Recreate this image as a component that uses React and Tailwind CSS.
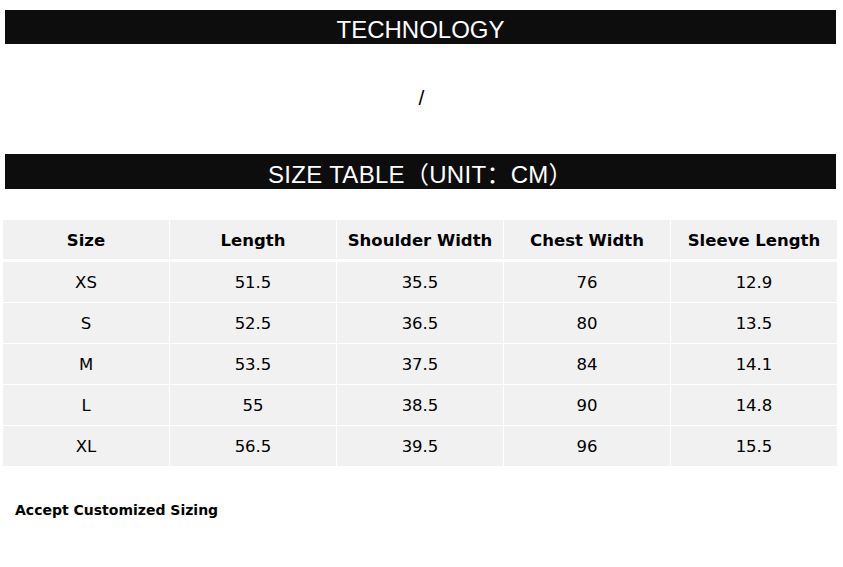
import React from "react";

const headers = ["Size", "Length", "Shoulder Width", "Chest Width", "Sleeve Length"];

const rows = [
  ["XS", "51.5", "35.5", "76", "12.9"],
  ["S", "52.5", "36.5", "80", "13.5"],
  ["M", "53.5", "37.5", "84", "14.1"],
  ["L", "55", "38.5", "90", "14.8"],
  ["XL", "56.5", "39.5", "96", "15.5"],
];

const titleFont = { fontFamily: '"Liberation Sans", "Noto Sans CJK SC", sans-serif' };

const TitleBar = ({ children, className = "" }) => (
  <div
    className={`ml-[5px] mr-[7px] bg-[#0d0d0d] text-white text-[24px] leading-none flex items-center justify-center ${className}`}
    style={titleFont}
  >
    <span className="pt-[6px]">{children}</span>
  </div>
);

export default function App() {
  return (
    <div className="w-[843px] h-[567px] bg-white overflow-hidden pt-[10px] font-['DejaVu_Sans',sans-serif] text-black">
      <TitleBar className="h-[34px]">TECHNOLOGY</TitleBar>

      {/* description placeholder */}
      <div
        className="h-[110px] flex items-center justify-center text-[21px] pb-[2px]"
        style={titleFont}
      >
        /
      </div>

      <TitleBar className="h-[35px]">
        <span className="tracking-[0.3px]">SIZE TABLE（UNIT：CM）</span>
      </TitleBar>

      <div className="mt-[31px] ml-[3px] w-[834px]">
        <div className="grid grid-cols-5 gap-px mb-[3px]">
          {headers.map((h) => (
            <div key={h} className="h-[39px] bg-[#f1f1f1] flex items-center justify-center text-[16.5px] font-bold pt-[3px]">
              {h}
            </div>
          ))}
        </div>
        <div className="flex flex-col gap-px">
          {rows.map((r) => (
            <div key={r[0]} className="grid grid-cols-5 gap-px">
              {r.map((c, i) => (
                <div key={i} className="h-[40px] bg-[#f1f1f1] flex items-center justify-center text-[16.5px] pt-[2px]">
                  {c}
                </div>
              ))}
            </div>
          ))}
        </div>
      </div>

      <p className="mt-[34px] ml-[15px] text-[14px] font-bold">Accept Customized Sizing</p>
    </div>
  );
}
